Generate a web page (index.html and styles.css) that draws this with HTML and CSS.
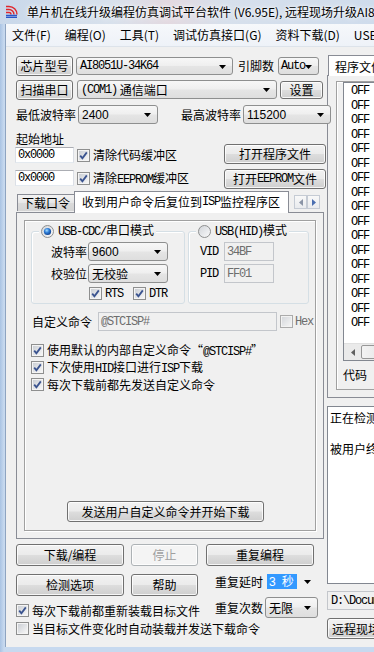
FILE: index.html
```html
<!DOCTYPE html>
<html lang="zh-CN">
<head>
<meta charset="utf-8">
<title>STC-ISP</title>
<link rel="stylesheet" href="styles.css">
</head>
<body>
<svg class="defs" width="0" height="0" aria-hidden="true">
  <defs>
    <linearGradient id="cbg" x1="0" y1="0" x2="1" y2="1">
      <stop offset="0" stop-color="#cbcfd5"/>
      <stop offset="1" stop-color="#f6f6f6"/>
    </linearGradient>
    <radialGradient id="rdot" cx="0.4" cy="0.35" r="0.7">
      <stop offset="0" stop-color="#a8e0ff"/>
      <stop offset="0.45" stop-color="#2f7ed8"/>
      <stop offset="1" stop-color="#0c3a86"/>
    </radialGradient>
    <linearGradient id="rbg" x1="0" y1="0" x2="1" y2="1">
      <stop offset="0" stop-color="#d0d3d8"/>
      <stop offset="1" stop-color="#fbfbfb"/>
    </linearGradient>
    <symbol id="chk" viewBox="0 0 13 13">
      <rect x="0.5" y="0.5" width="12" height="12" fill="#f4f4f4" stroke="#8e8f8f"/>
      <rect x="2" y="2" width="9" height="9" fill="url(#cbg)"/>
      <path d="M3.2 6.6 L5.4 9.2 L9.8 3.4" fill="none" stroke="#3a538f" stroke-width="1.8"/>
    </symbol>
    <symbol id="unchk" viewBox="0 0 13 13">
      <rect x="0.5" y="0.5" width="12" height="12" fill="#f4f4f4" stroke="#8e8f8f"/>
      <rect x="2" y="2" width="9" height="9" fill="url(#cbg)"/>
    </symbol>
    <symbol id="rad-on" viewBox="0 0 13 13">
      <circle cx="6.5" cy="6.5" r="6" fill="url(#rbg)" stroke="#8e8f8f"/>
      <circle cx="6.5" cy="6.5" r="3.6" fill="url(#rdot)"/>
    </symbol>
    <symbol id="rad-off" viewBox="0 0 13 13">
      <circle cx="6.5" cy="6.5" r="6" fill="url(#rbg)" stroke="#8e8f8f"/>
    </symbol>
    <symbol id="arrow" viewBox="0 0 7 4">
      <path d="M0 0 H7 L3.5 4 Z" fill="#000"/>
    </symbol>
  </defs>
</svg>

<div class="win">
  <div class="titlebar">
    <svg class="appicon" width="13" height="13" viewBox="0 0 13 13" aria-hidden="true">
      <path d="M1 1.5 H4 A8 8 0 0 1 12 9.5" fill="none" stroke="#e0262c" stroke-width="1.4"/>
      <path d="M1 4.5 H4 A5 5 0 0 1 9 9.5" fill="none" stroke="#e0262c" stroke-width="1.4"/>
      <path d="M1 7.5 H4 A2 2 0 0 1 6 9.5" fill="none" stroke="#e0262c" stroke-width="1.4"/>
      <path d="M1 10.5 H12 M1 12.3 H12" stroke="#2a55c8" stroke-width="1.3"/>
    </svg>
    <span class="title">单片机在线升级编程仿真调试平台软件 (V6.95E), 远程现场升级AI8051U</span>
  </div>

  <div class="client">
    <div class="menubar">
      <span>文件(F)</span><span>编程(O)</span><span>工具(T)</span><span>调试仿真接口(G)</span><span>资料下载(D)</span><span>USB-HID调试助手</span>
    </div>

    <div class="main">
      <!-- LEFT COLUMN -->
      <div class="leftcol">
        <div class="row r1">
          <div class="btn w57">芯片型号</div>
          <div class="combo w157"><span class="m">AI8051U-34K64</span><svg class="arr"><use href="#arrow"/></svg></div>
          <span class="lbl l-pin">引脚数</span>
          <div class="combo w41"><span class="m">Auto</span><svg class="arr"><use href="#arrow"/></svg></div>
        </div>
        <div class="row r2">
          <div class="btn w57">扫描串口</div>
          <div class="combo w200"><span class="m">(COM1)</span><span class="cn">&nbsp;通信端口</span><svg class="arr"><use href="#arrow"/></svg></div>
          <div class="btn w43 set">设置</div>
        </div>
        <div class="row r3">
          <span class="lbl">最低波特率</span>
          <div class="combo w80 sans"><span>2400</span><svg class="arr"><use href="#arrow"/></svg></div>
          <span class="lbl l-max">最高波特率</span>
          <div class="combo w88 sans"><span>115200</span><svg class="arr"><use href="#arrow"/></svg></div>
        </div>
        <div class="row r4"><span class="lbl">起始地址</span></div>
        <div class="row r5">
          <div class="edit w58"><span class="m">0x0000</span></div>
          <svg class="cb"><use href="#chk"/></svg>
          <span class="lbl">清除代码缓冲区</span>
          <div class="btn w101 push-right">打开程序文件</div>
        </div>
        <div class="row r6">
          <div class="edit w58"><span class="m">0x0000</span></div>
          <svg class="cb"><use href="#chk"/></svg>
          <span class="lbl">清除<span class="m">EEPROM</span>缓冲区</span>
          <div class="btn w101 push-right">打开<span class="m">EEPROM</span>文件</div>
        </div>

        <div class="tabs">
          <div class="tab">下载口令</div>
          <div class="tab sel">收到用户命令后复位到<span class="m">ISP</span>监控程序区</div>
          <div class="spin">
            <div class="sbtn"><svg width="4" height="7" viewBox="0 0 4 7"><path d="M4 0 V7 L0 3.5Z" fill="#8a94a6"/></svg></div>
            <div class="sbtn"><svg width="4" height="7" viewBox="0 0 4 7"><path d="M0 0 V7 L4 3.5Z" fill="#4a6eb0"/></svg></div>
          </div>
        </div>
        <div class="tabpanel">
          <div class="inner">
            <div class="groups">
              <div class="grp cdc">
                <div class="gtitle"><svg class="rd"><use href="#rad-on"/></svg><span><span class="m">USB-CDC/</span>串口模式</span></div>
                <div class="grow g1">
                  <span class="lbl glbl">波特率</span>
                  <div class="combo w80 sans"><span>9600</span><svg class="arr"><use href="#arrow"/></svg></div>
                </div>
                <div class="grow g2">
                  <span class="lbl glbl">校验位</span>
                  <div class="combo w80 sans"><span class="cn">无校验</span><svg class="arr"><use href="#arrow"/></svg></div>
                </div>
                <div class="grow g3">
                  <svg class="cb"><use href="#chk"/></svg><span class="m mlbl">RTS</span>
                  <svg class="cb cb2"><use href="#chk"/></svg><span class="m mlbl">DTR</span>
                </div>
              </div>
              <div class="grp hid">
                <div class="gtitle"><svg class="rd"><use href="#rad-off"/></svg><span><span class="m">USB(HID)</span>模式</span></div>
                <div class="grow g1">
                  <span class="m hlbl">VID</span>
                  <div class="edit dis w50"><span class="m">34BF</span></div>
                </div>
                <div class="grow g2">
                  <span class="m hlbl">PID</span>
                  <div class="edit dis w50"><span class="m">FF01</span></div>
                </div>
              </div>
            </div>
            <div class="cmdrow">
              <span class="lbl">自定义命令</span>
              <div class="edit dis w179"><span class="m">@STCISP#</span></div>
              <svg class="cb dis-cb"><use href="#unchk"/></svg><span class="m gray">Hex</span>
            </div>
            <div class="checks">
              <div class="ck"><svg class="cb"><use href="#chk"/></svg><span class="lbl">使用默认的内部自定义命令“<span class="m">@STCISP#</span>”</span></div>
              <div class="ck"><svg class="cb"><use href="#chk"/></svg><span class="lbl">下次使用<span class="m">HID</span>接口进行<span class="m">ISP</span>下载</span></div>
              <div class="ck"><svg class="cb"><use href="#chk"/></svg><span class="lbl">每次下载前都先发送自定义命令</span></div>
            </div>
            <div class="sendrow">
              <div class="btn w196">发送用户自定义命令并开始下载</div>
            </div>
          </div>
        </div>

        <div class="bottom">
          <div class="bleft">
            <div class="brow">
              <div class="btn w108 tall">下载/编程</div>
              <div class="btn w67 tall disabled">停止</div>
            </div>
            <div class="brow">
              <div class="btn w108 tall">检测选项</div>
              <div class="btn w67 tall">帮助</div>
            </div>
            <div class="ck ck1"><svg class="cb"><use href="#chk"/></svg><span class="lbl">每次下载前都重新装载目标文件</span></div>
          </div>
          <div class="bright">
            <div class="btn w108 tall">重复编程</div>
            <div class="rep r-delay">
              <span class="lbl">重复延时</span>
              <div class="combo plain w53"><span class="hl"><span class="sans">3</span>&ensp;秒</span><svg class="arr"><use href="#arrow"/></svg></div>
            </div>
            <div class="rep r-count">
              <span class="lbl">重复次数</span>
              <div class="combo w53"><span class="cn">无限</span><svg class="arr"><use href="#arrow"/></svg></div>
            </div>
          </div>
        </div>
        <div class="ck ck2"><svg class="cb"><use href="#unchk"/></svg><span class="lbl">当目标文件变化时自动装载并发送下载命令</span></div>
      </div>

      <!-- RIGHT COLUMN -->
      <div class="rightcol">
        <div class="rtabs"><div class="rtab">程序文件</div></div>
        <div class="rpanel">
          <div class="rinner">
            <div class="list">
              <div class="listbody">
                <div>OFF</div><div>OFF</div><div>OFF</div><div>OFF</div><div>OFF</div><div>OFF</div>
                <div>OFF</div><div>OFF</div><div>OFF</div><div>OFF</div><div>OFF</div><div>OFF</div>
                <div>OFF</div><div>OFF</div><div>OFF</div><div>OFF</div><div>OFF</div>
              </div>
              <div class="hscroll">
                <div class="sarrow"><svg width="4" height="7" viewBox="0 0 4 7"><path d="M4 0 V7 L0 3.5Z" fill="#606060"/></svg></div>
                <div class="thumb"></div>
              </div>
            </div>
            <div class="codelbl">代码</div>
          </div>
        </div>
        <div class="log">
          <div>正在检测目标单片机 ...</div>
          <div class="log2">被用户终止</div>
        </div>
        <div class="path"><span class="m">D:\Documents\</span></div>
        <div class="btn rbtn">远程现场升级</div>
      </div>
    </div>
  </div>
</div>
</body>
</html>
```

FILE: styles.css
```css
* { box-sizing: border-box; }
html, body { margin: 0; padding: 0; }
body {
  width: 374px;
  height: 652px;
  overflow: hidden;
  background: #c3d6ec;
  font-family: "Noto Sans CJK SC", "Liberation Sans", sans-serif;
  font-size: 12px;
  color: #000;
}
.defs { position: absolute; width: 0; height: 0; }

.win {
  width: 374px;
  height: 652px;
  background: linear-gradient(90deg, #a9c3e3 0px, #c7d9ef 4px, #c7d9ef 100%);
  overflow: hidden;
}

/* title bar */
.titlebar {
  height: 24px;
  display: flex;
  align-items: center;
  padding-left: 5px;
  background: linear-gradient(90deg, #c9d8ea 0%, #d8e1ec 30%, #e3d9e0 45%, #d7e0ec 60%, #cfdcec 100%);
  white-space: nowrap;
  overflow: hidden;
}
.appicon { flex: none; margin-top: -1px; }
.title {
  margin-left: 9px;
  font-size: 12px;
  line-height: 14px;
  color: #000;
  text-shadow: 0 0 6px #fff, 0 0 3px #fff;
}

/* client */
.client {
  margin-left: 5px;
  height: 623px;
  background: #f0f0f0;
  border-left: 1px solid #8ea4c1;
  overflow: hidden;
}
.menubar {
  height: 23px;
  display: flex;
  align-items: center;
  gap: 14px;
  padding-left: 6px;
  background: linear-gradient(#f6f8fb, #eef2f8);
  border-bottom: 1px solid #dde3ea;
  white-space: nowrap;
  font-size: 12px;
}
.menubar span { line-height: 14px; }

.main {
  display: flex;
  align-items: flex-start;
}
.leftcol {
  flex: none;
  width: 321px;
  padding-left: 10px;
  padding-top: 9px;
}

.m {
  font-family: "Liberation Mono", monospace;
  font-size: 12px;
  letter-spacing: -1.2px;
}
.sans { font-family: "Liberation Sans", sans-serif; font-size: 12px; }
.cn { font-family: "Noto Sans CJK SC", sans-serif; }

.row { display: flex; align-items: center; white-space: nowrap; }
.lbl { line-height: 14px; white-space: nowrap; }

/* buttons */
.btn {
  flex: none;
  height: 20px;
  display: flex;
  align-items: center;
  justify-content: center;
  border: 1px solid #707070;
  border-radius: 3px;
  background: linear-gradient(#f2f2f2 0%, #ebebeb 48%, #dddddd 52%, #cfcfcf 100%);
  box-shadow: inset 0 0 0 1px rgba(255,255,255,0.8);
  line-height: 14px;
  white-space: nowrap;
}
.btn.tall { height: 22px; }
.btn.disabled {
  color: #a0a0a0;
  border-color: #adb2b5;
  background: #f4f4f4;
}

/* combos */
.combo {
  flex: none;
  height: 19px;
  display: flex;
  align-items: center;
  padding-left: 3px;
  position: relative;
  border: 1px solid #8e8f8f;
  border-radius: 3px;
  background: linear-gradient(#f7f7f7 0%, #efefef 48%, #e5e5e5 52%, #dedede 100%);
  line-height: 14px;
  white-space: nowrap;
}
.combo .arr {
  position: absolute;
  right: 6px;
  top: 7px;
  width: 7px;
  height: 4px;
}
.combo.plain {
  border-color: transparent;
  background: transparent;
  padding-left: 1px;
}
.hl {
  background: #3399ff;
  color: #fff;
  padding: 0 3px 0 2px;
  line-height: 13px;
}

/* edit boxes */
.edit {
  flex: none;
  height: 16px;
  display: flex;
  align-items: center;
  padding-left: 2px;
  background: #fff;
  border: 1px solid #dbdfe6;
  border-top-color: #abadb3;
  border-bottom-color: #e3e9ef;
  line-height: 14px;
}
.edit.dis {
  background: #f0f0f0;
  color: #6d6d6d;
  border-color: #c3c6cb;
  height: 19px;
}
.gray { color: #6d6d6d; }

.cb { width: 13px; height: 13px; flex: none; }
.rd { width: 13px; height: 13px; flex: none; }

/* widths */
.w41 { width: 41px; }
.w43 { width: 43px; }
.w50 { width: 50px; }
.w53 { width: 53px; }
.w57 { width: 57px; }
.w58 { width: 59px; }
.w67 { width: 67px; }
.w80 { width: 80px; }
.w88 { width: 88px; }
.w101 { width: 102px; }
.w108 { width: 108px; }
.w157 { width: 157px; }
.w179 { width: 179px; }
.w196 { width: 197px; }
.w200 { width: 200px; }

/* row details */
.r1 { height: 20px; }
.r1 .combo { margin-left: 3px; height: 18px; }
.r1 .l-pin { margin-left: 5px; margin-right: 1px; }
.r1 .w41 { padding-left: 2px; }
.r2 { height: 19px; margin-top: 4px; }
.r2 .combo { margin-left: 4px; }
.r2 .set { margin-left: 3px; height: 18px; }
.r3 { height: 19px; margin-top: 6px; }
.r3 .combo { margin-left: 2px; }
.r3 .l-max { margin-left: 23px; }
.r4 { height: 14px; margin-top: 8px; }
.r5 { height: 20px; margin-top: -2px; align-items: flex-start; }
.r5 .edit, .r6 .edit { margin-left: -1px; margin-top: 3px; }
.r5 .cb, .r6 .cb { margin-left: 3px; margin-top: 5px; }
.r5 .lbl, .r6 .lbl { margin-left: 3px; margin-top: 4px; }
.r6 { height: 20px; margin-top: 5px; align-items: flex-start; }
.r6 .edit { margin-top: 1px; }
.r6 .cb { margin-top: 3px; }
.r6 .lbl { margin-top: 2px; }
.push-right { margin-left: auto; margin-right: 1px; }

/* tabs */
.tabs {
  height: 22px;
  margin-top: 1px;
  display: flex;
  align-items: flex-end;
  position: relative;
  z-index: 1;
  white-space: nowrap;
}
.tab {
  height: 17px;
  margin-bottom: 1px;
  margin-left: 1px;
  padding: 0 4px;
  display: flex;
  align-items: center;
  border: 1px solid #898c95;
  border-bottom: none;
  background: linear-gradient(#f3f3f3, #e6e6e6 50%, #dadada 51%, #d5d5d5);
  line-height: 14px;
}
.tab.sel {
  height: 22px;
  margin-bottom: -1px;
  margin-left: -1px;
  padding: 0 8px 2px 7px;
  background: #fff;
}
.spin {
  display: flex;
  margin-left: 5px;
  margin-bottom: 3px;
}
.sbtn {
  width: 13px;
  height: 14px;
  border: 1px solid #c5cbd4;
  background: linear-gradient(#f8f8f8, #e9ebee);
  display: flex;
  align-items: center;
  justify-content: center;
}

.tabpanel {
  width: 308px;
  height: 327px;
  border: 1px solid #898c95;
  background: #f0f0f0;
  padding: 7px 7px 0 7px;
}
.inner {
  height: 311px;
  border: 1px solid #a0a0a0;
  box-shadow: inset 1px 1px 0 #fff, 1px 1px 0 #fff;
  padding: 3px 6px 0 6px;
  display: flex;
  flex-direction: column;
}
.groups { display: flex; gap: 3px; height: 80px; }
.grp {
  position: relative;
  margin-top: 7px;
  height: 73px;
  border: 1px solid #d5dfe5;
  border-radius: 3px;
  box-shadow: inset 1px 1px 0 #fff;
}
.grp.cdc { width: 154px; }
.grp.hid { width: 121px; }
.gtitle {
  position: absolute;
  top: -8px;
  left: 7px;
  padding: 0 2px;
  background: #f0f0f0;
  display: flex;
  align-items: center;
  gap: 4px;
  height: 14px;
  line-height: 14px;
  white-space: nowrap;
}
.grow { display: flex; align-items: center; }
.cdc .g1 { margin-top: 10px; height: 19px; }
.cdc .g2 { margin-top: 3px; height: 19px; }
.cdc .g3 { margin-top: 4px; height: 13px; padding-left: 57px; }
.glbl { width: 55px; text-align: right; margin-right: 1px; display: inline-block; }
.mlbl { margin-left: 3px; }
.cb2 { margin-left: 10px; }
.hid .g1 { margin-top: 10px; height: 19px; }
.hid .g2 { margin-top: 3px; height: 19px; }
.hlbl { width: 29px; text-align: right; margin-right: 6px; display: inline-block; }

.cmdrow {
  display: flex;
  align-items: center;
  margin-top: 8px;
  height: 19px;
  padding-left: 1px;
}
.cmdrow .edit { margin-left: 6px; }
.dis-cb { margin-left: 3px; opacity: 0.7; }
.cmdrow .gray { margin-left: 2px; }

.checks { margin-top: 13px; display: flex; flex-direction: column; gap: 4px; }
.ck { display: flex; align-items: center; gap: 3px; height: 13px; white-space: nowrap; }
.sendrow { margin-top: auto; margin-bottom: 8px; padding-left: 36px; }
.sendrow .btn { height: 21px; }

/* bottom */
.bottom { display: flex; margin-top: 5px; }
.bleft { width: 190px; }
.brow { display: flex; gap: 7px; margin-bottom: 8px; }
.ck1 { margin-top: 0; }
.rep { display: flex; align-items: center; }
.r-delay { margin-top: 6px; height: 19px; padding-left: 9px; }
.r-delay .combo { margin-left: 2px; }
.r-count { margin-top: 6px; height: 21px; padding-left: 9px; }
.r-count .combo { margin-left: 2px; height: 21px; }
.r-count .combo .arr { top: 8px; }
.ck2 { margin-top: 4px; }

/* right column */
.rightcol {
  flex: none;
  width: 160px;
  padding-top: 6px;
}
.rtabs { height: 22px; display: flex; align-items: flex-end; }
.rtab {
  height: 21px;
  padding: 0 6px;
  margin-left: 1px;
  display: flex;
  align-items: center;
  border: 1px solid #898c95;
  border-bottom: none;
  background: #fff;
  margin-bottom: -1px;
  position: relative;
  z-index: 1;
}
.rpanel {
  height: 323px;
  border: 1px solid #898c95;
  padding: 5px 0 0 8px;
  background: #f0f0f0;
}
.rinner {
  height: 309px;
  border: 1px solid #a0a0a0;
  box-shadow: inset 1px 1px 0 #fff;
  padding: 0 0 0 6px;
}
.list {
  height: 279px;
  border: 1px solid #828790;
  background: #fff;
  display: flex;
  flex-direction: column;
}
.listbody {
  flex: 1;
  padding: 1px 0 0 7px;
  font-family: "Liberation Mono", monospace;
  font-size: 12px;
  letter-spacing: -1.2px;
}
.listbody div { height: 14.5px; line-height: 14.5px; }
.hscroll {
  height: 17px;
  display: flex;
  background: #eaeaea;
  border-top: 1px solid #e0e0e0;
}
.sarrow {
  width: 17px;
  display: flex;
  align-items: center;
  justify-content: center;
}
.thumb {
  width: 30px;
  margin: 1px 0;
  border: 1px solid #979797;
  border-radius: 2px;
  background: linear-gradient(90deg, #f3f3f3, #e2e2e2);
}
.codelbl { margin-top: 7px; line-height: 14px; }

.log {
  margin-top: 8px;
  height: 178px;
  border: 1px solid #828790;
  background: #fff;
  padding: 4px 0 0 2px;
  white-space: nowrap;
  line-height: 14px;
}
.log2 { margin-top: 17px; }
.path {
  margin-top: 7px;
  height: 19px;
  border: 1px solid #c3c6cb;
  background: #f0f0f0;
  display: flex;
  align-items: center;
  padding-left: 3px;
  white-space: nowrap;
}
.rbtn {
  margin-top: 8px;
  width: 110px;
  height: 21px;
  justify-content: flex-start;
  padding-left: 4px;
}
```
